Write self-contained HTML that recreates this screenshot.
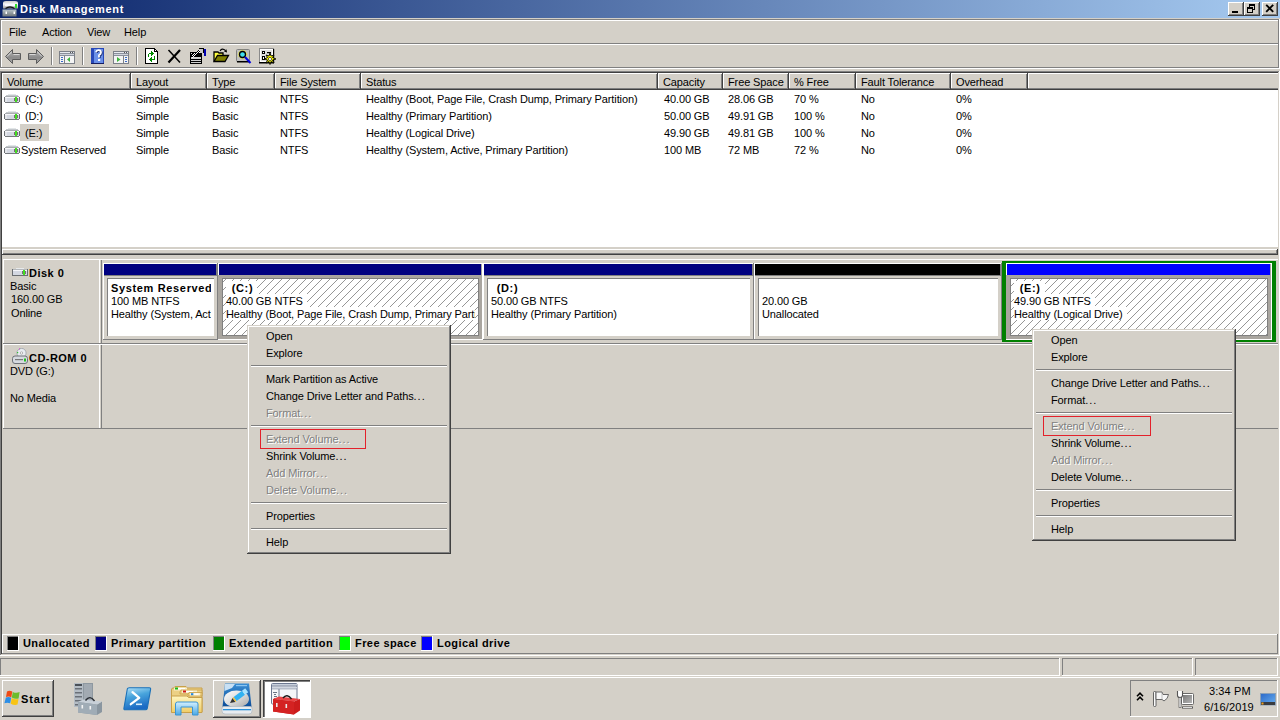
<!DOCTYPE html><html><head><meta charset="utf-8"><title>Disk Management</title><style>html,body{margin:0;padding:0}body{width:1280px;height:720px;overflow:hidden;position:relative;background:#d4d0c8;font-family:"Liberation Sans",sans-serif;font-size:11px;color:#000}body div{position:absolute}.t{white-space:nowrap;line-height:13px;font-size:11px}</style></head><body>
<div style="left:0px;top:0px;width:1280px;height:18px;background:linear-gradient(to right,#0a246a,#a6caf0);"></div>
<svg style="position:absolute;left:2px;top:0px" width="17" height="17" viewBox="0 0 17 17"><defs><linearGradient id="tb" x1="0" y1="0" x2="0" y2="1"><stop offset="0" stop-color="#b8c4c8"/><stop offset="1" stop-color="#6c7478"/></linearGradient><linearGradient id="td" x1="0" y1="0" x2="0" y2="1"><stop offset="0" stop-color="#c8c8c8"/><stop offset="0.4" stop-color="#f4f4f8"/><stop offset="1" stop-color="#a0a0a0"/></linearGradient></defs><rect x="0.5" y="9.5" width="14" height="7" fill="url(#tb)"/><rect x="3.5" y="11.5" width="1.5" height="2.5" fill="#fff"/><rect x="11.5" y="11.5" width="1.5" height="2.5" fill="#fff"/><path d="M1 3 Q1 1 4 1 H13 Q16 1 16 3 V8.5 H1 Z" fill="url(#td)"/><rect x="3" y="4" width="10" height="2" fill="#f8f8ff"/><rect x="13" y="4" width="2" height="4" fill="#30e030"/><path d="M3.5 8.5 Q8 5.5 12.5 8.5" fill="none" stroke="#111" stroke-width="1.4"/></svg>
<div class="t" style="left:20px;top:3px;font-weight:bold;color:#fff;letter-spacing:0.7px;">Disk Management</div>
<div style="left:1228px;top:2px;width:16px;height:14px;background:#d4d0c8;"></div>
<div style="left:1228px;top:2px;width:16px;height:1px;background:#ffffff;"></div>
<div style="left:1228px;top:2px;width:1px;height:14px;background:#ffffff;"></div>
<div style="left:1228px;top:15px;width:16px;height:1px;background:#404040;"></div>
<div style="left:1243px;top:2px;width:1px;height:14px;background:#404040;"></div>
<div style="left:1229px;top:14px;width:14px;height:1px;background:#808080;"></div>
<div style="left:1242px;top:3px;width:1px;height:12px;background:#808080;"></div>
<div style="left:1244px;top:2px;width:16px;height:14px;background:#d4d0c8;"></div>
<div style="left:1244px;top:2px;width:16px;height:1px;background:#ffffff;"></div>
<div style="left:1244px;top:2px;width:1px;height:14px;background:#ffffff;"></div>
<div style="left:1244px;top:15px;width:16px;height:1px;background:#404040;"></div>
<div style="left:1259px;top:2px;width:1px;height:14px;background:#404040;"></div>
<div style="left:1245px;top:14px;width:14px;height:1px;background:#808080;"></div>
<div style="left:1258px;top:3px;width:1px;height:12px;background:#808080;"></div>
<div style="left:1262px;top:2px;width:16px;height:14px;background:#d4d0c8;"></div>
<div style="left:1262px;top:2px;width:16px;height:1px;background:#ffffff;"></div>
<div style="left:1262px;top:2px;width:1px;height:14px;background:#ffffff;"></div>
<div style="left:1262px;top:15px;width:16px;height:1px;background:#404040;"></div>
<div style="left:1277px;top:2px;width:1px;height:14px;background:#404040;"></div>
<div style="left:1263px;top:14px;width:14px;height:1px;background:#808080;"></div>
<div style="left:1276px;top:3px;width:1px;height:12px;background:#808080;"></div>
<div style="left:1232px;top:11px;width:6px;height:2px;background:#000;"></div>
<svg style="position:absolute;left:1247px;top:4px" width="10" height="10" viewBox="0 0 10 10" shape-rendering="crispEdges"><path d="M2 0h6v2h-6z M7 2h1v4h-1z M2 2h1v1h-1z M6 5h1v1h-1z" fill="#000"/><path d="M0 3h6v2h-6z M0 5h1v4h-1z M5 5h1v4h-1z M0 8h6v1h-6z" fill="#000"/></svg>
<svg style="position:absolute;left:1265px;top:4px" width="10" height="9" viewBox="0 0 10 9"><path d="M1.2 0.8 L8.2 7.8 M8.2 0.8 L1.2 7.8" stroke="#000" stroke-width="1.9"/></svg>
<div style="left:0px;top:19px;width:1279px;height:1px;background:#808080;"></div>
<div style="left:0px;top:19px;width:1px;height:49px;background:#808080;"></div>
<div style="left:1px;top:20px;width:1277px;height:1px;background:#ffffff;"></div>
<div style="left:1px;top:20px;width:1px;height:47px;background:#ffffff;"></div>
<div style="left:1278px;top:19px;width:1px;height:49px;background:#808080;"></div>
<div style="left:1279px;top:19px;width:1px;height:50px;background:#ffffff;"></div>
<div style="left:0px;top:67px;width:1279px;height:1px;background:#808080;"></div>
<div style="left:0px;top:68px;width:1280px;height:1px;background:#ffffff;"></div>
<div style="left:2px;top:43px;width:1276px;height:1px;background:#808080;"></div>
<div style="left:1px;top:44px;width:1277px;height:1px;background:#ffffff;"></div>
<div class="t" style="left:9px;top:26px;color:#000;letter-spacing:-0.12px;">File</div>
<div class="t" style="left:42px;top:26px;color:#000;letter-spacing:-0.12px;">Action</div>
<div class="t" style="left:87px;top:26px;color:#000;letter-spacing:-0.12px;">View</div>
<div class="t" style="left:124px;top:26px;color:#000;letter-spacing:-0.12px;">Help</div>
<svg style="position:absolute;left:4px;top:48px" width="18" height="17" viewBox="0 0 18 17"><defs><linearGradient id="ga" x1="0" y1="0" x2="0" y2="1"><stop offset="0" stop-color="#b8b8b8"/><stop offset="0.6" stop-color="#8a8a8a"/><stop offset="1" stop-color="#b0b0b0"/></linearGradient></defs><path d="M1.5 8.5 L8.5 1.5 V5.5 H16.5 V11.5 H8.5 V15.5 Z" fill="url(#ga)" stroke="#5c5c5c" stroke-linejoin="round"/><path d="M3 8.5 L7.5 4 M9.5 6.5 H15.5" stroke="#e8e8e8" stroke-width="0.8" fill="none"/></svg>
<svg style="position:absolute;left:27px;top:48px" width="18" height="17" viewBox="0 0 18 17"><path d="M16.5 8.5 L9.5 1.5 V5.5 H1.5 V11.5 H9.5 V15.5 Z" fill="url(#ga)" stroke="#5c5c5c" stroke-linejoin="round"/><path d="M15 8.5 L10.5 4 M2.5 6.5 H8.5" stroke="#e8e8e8" stroke-width="0.8" fill="none"/></svg>
<div style="left:51px;top:47px;width:1px;height:18px;background:#808080;"></div>
<div style="left:52px;top:47px;width:1px;height:18px;background:#ffffff;"></div>
<svg style="position:absolute;left:59px;top:51px" width="16" height="13" viewBox="0 0 16 13"><rect x="0.5" y="0.5" width="15" height="12" fill="#f4f4f4" stroke="#7c8088"/><rect x="1" y="1" width="14" height="1" fill="#e8eaf0"/><rect x="1" y="2" width="14" height="1" fill="#8a909c"/><rect x="11" y="1" width="1" height="1" fill="#555"/><rect x="13" y="1" width="1" height="1" fill="#555"/><rect x="1" y="3" width="14" height="1" fill="#d0d4dc"/><rect x="1" y="4" width="14" height="1" fill="#8a909c"/><rect x="5" y="5" width="1" height="7" fill="#7c8088"/><rect x="2" y="6" width="2" height="1" fill="#3a6cc8"/><rect x="2" y="8" width="2" height="1" fill="#3a6cc8"/><rect x="2" y="10" width="2" height="1" fill="#3a6cc8"/><path d="M8 8.5 L11 6 V11 Z" fill="#3cb53c"/></svg>
<div style="left:82px;top:47px;width:1px;height:18px;background:#808080;"></div>
<div style="left:83px;top:47px;width:1px;height:18px;background:#ffffff;"></div>
<svg style="position:absolute;left:91px;top:48px" width="13" height="16" viewBox="0 0 13 16"><rect x="0" y="0" width="13" height="16" fill="#2848b8"/><rect x="3" y="1" width="9" height="14" fill="#6a90e8"/><rect x="0" y="15" width="13" height="1" fill="#141c60"/><path d="M5 4.2 Q5.5 2.2 7.5 2.2 Q10 2.2 10 4.6 Q10 6.2 8 7.2 L8 9.5" fill="none" stroke="#1c2c70" stroke-width="1.8" transform="translate(0.8,0.6)"/><path d="M5 4.2 Q5.5 2.2 7.5 2.2 Q10 2.2 10 4.6 Q10 6.2 8 7.2 L8 9.5" fill="none" stroke="#fff" stroke-width="1.8"/><rect x="7" y="11" width="2.2" height="2" fill="#fff"/></svg>
<svg style="position:absolute;left:113px;top:51px" width="16" height="13" viewBox="0 0 16 13"><rect x="0.5" y="0.5" width="15" height="12" fill="#f4f4f4" stroke="#7c8088"/><rect x="1" y="1" width="14" height="1" fill="#e8eaf0"/><rect x="1" y="2" width="14" height="1" fill="#8a909c"/><rect x="11" y="1" width="1" height="1" fill="#555"/><rect x="13" y="1" width="1" height="1" fill="#555"/><rect x="1" y="3" width="14" height="1" fill="#d0d4dc"/><rect x="1" y="4" width="14" height="1" fill="#8a909c"/><rect x="10" y="5" width="1" height="7" fill="#7c8088"/><rect x="12" y="6" width="2" height="1" fill="#3a6cc8"/><rect x="12" y="8" width="2" height="1" fill="#3a6cc8"/><rect x="12" y="10" width="2" height="1" fill="#3a6cc8"/><path d="M7.5 8.5 L4 6 V11 Z" fill="#3cb53c"/></svg>
<div style="left:136px;top:47px;width:1px;height:18px;background:#808080;"></div>
<div style="left:137px;top:47px;width:1px;height:18px;background:#ffffff;"></div>
<svg style="position:absolute;left:145px;top:48px" width="13" height="16" viewBox="0 0 13 16" shape-rendering="crispEdges"><path d="M0 0h10v1h-10z M0 1h1v14h-1z M0 15h13v1h-13z M12 3h1v12h-1z M10 1h1v1h-1z M11 2h1v1h-1z M9 1h1v3h-1z M9 3h3v1h-3z" fill="#000"/><path d="M1 1h8v3h3v11h-11z" fill="#fff"/><path d="M10 2h1v1h-1z" fill="#fff"/><path d="M4 5h5v1h-5z M6 3h1v5h-1z M7 4h1v3h-1z M8 5h1v1h-1z M3 6h1v3h-1z" fill="#008c00"/><path d="M5 11h5v1h-5z M6 9h1v5h-1z M5 10h1v3h-1z M4 11h1v1h-1z M9 8h1v3h-1z" fill="#008c00"/></svg>
<svg style="position:absolute;left:167px;top:49px" width="15" height="15" viewBox="0 0 15 15"><path d="M1.5 13.5 L13 1" stroke="#000" stroke-width="2.2"/><path d="M1.5 1 L13 13.5" stroke="#000" stroke-width="1.5"/></svg>
<svg style="position:absolute;left:190px;top:48px" width="16" height="16" viewBox="0 0 16 16" shape-rendering="crispEdges"><rect x="0" y="4" width="12" height="12" fill="#000"/><rect x="1" y="9" width="10" height="2" fill="#d0d0d0"/><rect x="1" y="12" width="10" height="1" fill="#d0d0d0"/><rect x="1" y="14" width="10" height="1" fill="#d0d0d0"/><rect x="1" y="5" width="1" height="1" fill="#ddd"/><rect x="2" y="7" width="1" height="1" fill="#fff"/><rect x="2" y="8" width="1" height="1" fill="#000"/><rect x="2" y="9" width="1" height="1" fill="#fff"/><rect x="3" y="6" width="1" height="1" fill="#fff"/><rect x="3" y="7" width="1" height="1" fill="#000"/><rect x="3" y="8" width="1" height="1" fill="#fff"/><rect x="4" y="5" width="1" height="1" fill="#fff"/><rect x="4" y="6" width="1" height="1" fill="#000"/><rect x="4" y="7" width="1" height="1" fill="#fff"/><rect x="5" y="5" width="1" height="1" fill="#000"/><rect x="5" y="6" width="1" height="1" fill="#fff"/><rect x="5" y="7" width="1" height="1" fill="#000"/><rect x="6" y="4" width="1" height="1" fill="#000"/><rect x="6" y="5" width="1" height="1" fill="#fff"/><rect x="6" y="6" width="1" height="1" fill="#000"/><rect x="7" y="3" width="1" height="1" fill="#000"/><rect x="7" y="4" width="1" height="1" fill="#fff"/><rect x="7" y="5" width="1" height="1" fill="#000"/><rect x="8" y="2" width="1" height="1" fill="#000"/><rect x="8" y="3" width="1" height="1" fill="#fff"/><rect x="8" y="4" width="1" height="1" fill="#000"/><rect x="9" y="2" width="1" height="1" fill="#fff"/><rect x="9" y="3" width="1" height="1" fill="#000"/><rect x="9" y="4" width="1" height="1" fill="#fff"/><rect x="10" y="1" width="1" height="1" fill="#fff"/><rect x="10" y="2" width="1" height="1" fill="#000"/><rect x="10" y="3" width="1" height="1" fill="#fff"/><rect x="11" y="0" width="1" height="1" fill="#fff"/><rect x="11" y="1" width="1" height="1" fill="#000"/><rect x="11" y="2" width="1" height="1" fill="#fff"/><rect x="9" y="0" width="5" height="1" fill="#000"/><rect x="10" y="1" width="3" height="4" fill="#c8c8c8"/><rect x="13" y="1" width="1" height="4" fill="#000"/><rect x="14" y="1" width="1.5" height="7" fill="#0000b0"/></svg>
<svg style="position:absolute;left:213px;top:48px" width="17" height="15" viewBox="0 0 17 15"><path d="M1 13.5 V4 H5 L6 5 H10 V8" fill="#ffff40" stroke="#000" stroke-width="1.3"/><path d="M1 13.5 L4.5 7.5 H15.5 L12 13.5 Z" fill="#808000" stroke="#000" stroke-width="1.3"/><path d="M7 3 Q9 -0.5 12.5 2.5" fill="none" stroke="#000" stroke-width="1.1"/><path d="M11 3.5 L14 4.5 L13.5 1.2 Z" fill="#000"/></svg>
<svg style="position:absolute;left:236px;top:48px" width="16" height="17" viewBox="0 0 16 17"><rect x="0.5" y="1.5" width="13" height="12" rx="1" fill="#c0c0c0" stroke="#808080"/><rect x="1" y="13" width="13" height="1.5" fill="#000"/><circle cx="6.5" cy="6.5" r="4.2" fill="none" stroke="#ffff00" stroke-width="1" stroke-dasharray="1 1"/><circle cx="6.5" cy="6.5" r="3" fill="#40e0f0" stroke="#000" stroke-width="1.3"/><path d="M9 9 L14.5 15" stroke="#0000e0" stroke-width="2"/></svg>
<svg style="position:absolute;left:259px;top:48px" width="18" height="17" viewBox="0 0 18 17"><rect x="0.5" y="0.5" width="14" height="14" fill="#fff" stroke="#8a8a8a"/><rect x="2" y="2" width="11" height="11" fill="#e0e0e0"/><rect x="0" y="14" width="15" height="1.5" fill="#000"/><rect x="14" y="1" width="1.2" height="14" fill="#000"/><rect x="3" y="3" width="3" height="3" fill="#000"/><rect x="4" y="4" width="1" height="1" fill="#fff"/><rect x="8" y="4" width="4" height="1.2" fill="#000"/><rect x="3" y="8" width="3" height="4" fill="#000"/><rect x="4" y="9" width="1" height="2" fill="#fff"/><path d="M11 5 L12 8 L15 7 L13.5 9.5 L17 11 L13.5 12 L15 15 L12 13.5 L11 16.5 L10 13.5 L7 15 L8.5 12 L5.5 11 L8.5 9.5 L7 7 L10 8 Z" fill="#ffff00" stroke="#000" stroke-width="0.9"/><circle cx="11" cy="11" r="1.6" fill="#fff" stroke="#000" stroke-width="0.6"/></svg>
<div style="left:0px;top:71px;width:1279px;height:1px;background:#808080;"></div>
<div style="left:0px;top:71px;width:1px;height:584px;background:#808080;"></div>
<div style="left:1px;top:72px;width:1277px;height:1px;background:#404040;"></div>
<div style="left:1px;top:72px;width:1px;height:582px;background:#404040;"></div>
<div style="left:1279px;top:71px;width:1px;height:585px;background:#ffffff;"></div>
<div style="left:0px;top:655px;width:1280px;height:1px;background:#ffffff;"></div>
<div style="left:2px;top:73px;width:1276px;height:174px;background:#ffffff;"></div>
<div style="left:2px;top:73px;width:1276px;height:17px;background:#d4d0c8;"></div>
<div style="left:2px;top:73px;width:129px;height:1px;background:#ffffff;"></div>
<div style="left:2px;top:73px;width:1px;height:16px;background:#ffffff;"></div>
<div style="left:129px;top:74px;width:1px;height:15px;background:#808080;"></div>
<div style="left:130px;top:73px;width:1px;height:17px;background:#404040;"></div>
<div class="t" style="left:7px;top:76px;color:#000;letter-spacing:-0.12px;">Volume</div>
<div style="left:131px;top:73px;width:76px;height:1px;background:#ffffff;"></div>
<div style="left:131px;top:73px;width:1px;height:16px;background:#ffffff;"></div>
<div style="left:205px;top:74px;width:1px;height:15px;background:#808080;"></div>
<div style="left:206px;top:73px;width:1px;height:17px;background:#404040;"></div>
<div class="t" style="left:136px;top:76px;color:#000;letter-spacing:-0.12px;">Layout</div>
<div style="left:207px;top:73px;width:68px;height:1px;background:#ffffff;"></div>
<div style="left:207px;top:73px;width:1px;height:16px;background:#ffffff;"></div>
<div style="left:273px;top:74px;width:1px;height:15px;background:#808080;"></div>
<div style="left:274px;top:73px;width:1px;height:17px;background:#404040;"></div>
<div class="t" style="left:212px;top:76px;color:#000;letter-spacing:-0.12px;">Type</div>
<div style="left:275px;top:73px;width:86px;height:1px;background:#ffffff;"></div>
<div style="left:275px;top:73px;width:1px;height:16px;background:#ffffff;"></div>
<div style="left:359px;top:74px;width:1px;height:15px;background:#808080;"></div>
<div style="left:360px;top:73px;width:1px;height:17px;background:#404040;"></div>
<div class="t" style="left:280px;top:76px;color:#000;letter-spacing:-0.12px;">File System</div>
<div style="left:361px;top:73px;width:297px;height:1px;background:#ffffff;"></div>
<div style="left:361px;top:73px;width:1px;height:16px;background:#ffffff;"></div>
<div style="left:656px;top:74px;width:1px;height:15px;background:#808080;"></div>
<div style="left:657px;top:73px;width:1px;height:17px;background:#404040;"></div>
<div class="t" style="left:366px;top:76px;color:#000;letter-spacing:-0.12px;">Status</div>
<div style="left:658px;top:73px;width:65px;height:1px;background:#ffffff;"></div>
<div style="left:658px;top:73px;width:1px;height:16px;background:#ffffff;"></div>
<div style="left:721px;top:74px;width:1px;height:15px;background:#808080;"></div>
<div style="left:722px;top:73px;width:1px;height:17px;background:#404040;"></div>
<div class="t" style="left:663px;top:76px;color:#000;letter-spacing:-0.12px;">Capacity</div>
<div style="left:723px;top:73px;width:66px;height:1px;background:#ffffff;"></div>
<div style="left:723px;top:73px;width:1px;height:16px;background:#ffffff;"></div>
<div style="left:787px;top:74px;width:1px;height:15px;background:#808080;"></div>
<div style="left:788px;top:73px;width:1px;height:17px;background:#404040;"></div>
<div class="t" style="left:728px;top:76px;color:#000;letter-spacing:-0.12px;">Free Space</div>
<div style="left:789px;top:73px;width:67px;height:1px;background:#ffffff;"></div>
<div style="left:789px;top:73px;width:1px;height:16px;background:#ffffff;"></div>
<div style="left:854px;top:74px;width:1px;height:15px;background:#808080;"></div>
<div style="left:855px;top:73px;width:1px;height:17px;background:#404040;"></div>
<div class="t" style="left:794px;top:76px;color:#000;letter-spacing:-0.12px;">% Free</div>
<div style="left:856px;top:73px;width:95px;height:1px;background:#ffffff;"></div>
<div style="left:856px;top:73px;width:1px;height:16px;background:#ffffff;"></div>
<div style="left:949px;top:74px;width:1px;height:15px;background:#808080;"></div>
<div style="left:950px;top:73px;width:1px;height:17px;background:#404040;"></div>
<div class="t" style="left:861px;top:76px;color:#000;letter-spacing:-0.12px;">Fault Tolerance</div>
<div style="left:951px;top:73px;width:77px;height:1px;background:#ffffff;"></div>
<div style="left:951px;top:73px;width:1px;height:16px;background:#ffffff;"></div>
<div style="left:1026px;top:74px;width:1px;height:15px;background:#808080;"></div>
<div style="left:1027px;top:73px;width:1px;height:17px;background:#404040;"></div>
<div class="t" style="left:956px;top:76px;color:#000;letter-spacing:-0.12px;">Overhead</div>
<div style="left:1028px;top:73px;width:250px;height:1px;background:#ffffff;"></div>
<div style="left:1028px;top:73px;width:1px;height:16px;background:#ffffff;"></div>
<div style="left:2px;top:88px;width:1276px;height:1px;background:#808080;"></div>
<div style="left:2px;top:89px;width:1276px;height:1px;background:#404040;"></div>
<div style="left:130px;top:73px;width:1px;height:17px;background:#404040;"></div>
<div style="left:206px;top:73px;width:1px;height:17px;background:#404040;"></div>
<div style="left:274px;top:73px;width:1px;height:17px;background:#404040;"></div>
<div style="left:360px;top:73px;width:1px;height:17px;background:#404040;"></div>
<div style="left:657px;top:73px;width:1px;height:17px;background:#404040;"></div>
<div style="left:722px;top:73px;width:1px;height:17px;background:#404040;"></div>
<div style="left:788px;top:73px;width:1px;height:17px;background:#404040;"></div>
<div style="left:855px;top:73px;width:1px;height:17px;background:#404040;"></div>
<div style="left:950px;top:73px;width:1px;height:17px;background:#404040;"></div>
<div style="left:1027px;top:73px;width:1px;height:17px;background:#404040;"></div>
<div style="left:20px;top:124px;width:29px;height:17px;background:#d4d0c8;"></div>
<svg style="position:absolute;left:4px;top:94px" width="16" height="9" viewBox="0 0 16 9" shape-rendering="crispEdges"><rect x="4" y="0" width="8" height="1" fill="#e2e6e8"/><rect x="2" y="1" width="12" height="1" fill="#c4c8cc"/><rect x="1" y="2" width="14" height="1" fill="#a8acb0"/><rect x="0" y="3" width="1" height="5" fill="#6a6e72"/><rect x="15" y="3" width="1" height="5" fill="#6a6e72"/><rect x="1" y="3" width="14" height="1" fill="#f6f6fa"/><rect x="1" y="4" width="14" height="4" fill="#d4d8e2"/><rect x="1" y="4" width="2" height="4" fill="#e4e6ea"/><rect x="10" y="4" width="1" height="3" fill="#7a6a7a"/><rect x="13" y="4" width="1" height="3" fill="#7a6a7a"/><rect x="11" y="3" width="2" height="5" fill="#44dd22"/><rect x="1" y="8" width="14" height="1" fill="#74787c"/></svg>
<div class="t" style="left:25px;top:93px;color:#000;letter-spacing:-0.12px;">(C:)</div>
<div class="t" style="left:136px;top:93px;color:#000;letter-spacing:-0.12px;">Simple</div>
<div class="t" style="left:212px;top:93px;color:#000;letter-spacing:-0.12px;">Basic</div>
<div class="t" style="left:280px;top:93px;color:#000;letter-spacing:-0.12px;">NTFS</div>
<div class="t" style="left:366px;top:93px;color:#000;letter-spacing:-0.12px;">Healthy (Boot, Page File, Crash Dump, Primary Partition)</div>
<div class="t" style="left:664px;top:93px;color:#000;letter-spacing:-0.12px;">40.00 GB</div>
<div class="t" style="left:728px;top:93px;color:#000;letter-spacing:-0.12px;">28.06 GB</div>
<div class="t" style="left:794px;top:93px;color:#000;letter-spacing:-0.12px;">70 %</div>
<div class="t" style="left:861px;top:93px;color:#000;letter-spacing:-0.12px;">No</div>
<div class="t" style="left:956px;top:93px;color:#000;letter-spacing:-0.12px;">0%</div>
<svg style="position:absolute;left:4px;top:111px" width="16" height="9" viewBox="0 0 16 9" shape-rendering="crispEdges"><rect x="4" y="0" width="8" height="1" fill="#e2e6e8"/><rect x="2" y="1" width="12" height="1" fill="#c4c8cc"/><rect x="1" y="2" width="14" height="1" fill="#a8acb0"/><rect x="0" y="3" width="1" height="5" fill="#6a6e72"/><rect x="15" y="3" width="1" height="5" fill="#6a6e72"/><rect x="1" y="3" width="14" height="1" fill="#f6f6fa"/><rect x="1" y="4" width="14" height="4" fill="#d4d8e2"/><rect x="1" y="4" width="2" height="4" fill="#e4e6ea"/><rect x="10" y="4" width="1" height="3" fill="#7a6a7a"/><rect x="13" y="4" width="1" height="3" fill="#7a6a7a"/><rect x="11" y="3" width="2" height="5" fill="#44dd22"/><rect x="1" y="8" width="14" height="1" fill="#74787c"/></svg>
<div class="t" style="left:25px;top:110px;color:#000;letter-spacing:-0.12px;">(D:)</div>
<div class="t" style="left:136px;top:110px;color:#000;letter-spacing:-0.12px;">Simple</div>
<div class="t" style="left:212px;top:110px;color:#000;letter-spacing:-0.12px;">Basic</div>
<div class="t" style="left:280px;top:110px;color:#000;letter-spacing:-0.12px;">NTFS</div>
<div class="t" style="left:366px;top:110px;color:#000;letter-spacing:-0.12px;">Healthy (Primary Partition)</div>
<div class="t" style="left:664px;top:110px;color:#000;letter-spacing:-0.12px;">50.00 GB</div>
<div class="t" style="left:728px;top:110px;color:#000;letter-spacing:-0.12px;">49.91 GB</div>
<div class="t" style="left:794px;top:110px;color:#000;letter-spacing:-0.12px;">100 %</div>
<div class="t" style="left:861px;top:110px;color:#000;letter-spacing:-0.12px;">No</div>
<div class="t" style="left:956px;top:110px;color:#000;letter-spacing:-0.12px;">0%</div>
<svg style="position:absolute;left:4px;top:128px" width="16" height="9" viewBox="0 0 16 9" shape-rendering="crispEdges"><rect x="4" y="0" width="8" height="1" fill="#e2e6e8"/><rect x="2" y="1" width="12" height="1" fill="#c4c8cc"/><rect x="1" y="2" width="14" height="1" fill="#a8acb0"/><rect x="0" y="3" width="1" height="5" fill="#6a6e72"/><rect x="15" y="3" width="1" height="5" fill="#6a6e72"/><rect x="1" y="3" width="14" height="1" fill="#f6f6fa"/><rect x="1" y="4" width="14" height="4" fill="#d4d8e2"/><rect x="1" y="4" width="2" height="4" fill="#e4e6ea"/><rect x="10" y="4" width="1" height="3" fill="#7a6a7a"/><rect x="13" y="4" width="1" height="3" fill="#7a6a7a"/><rect x="11" y="3" width="2" height="5" fill="#44dd22"/><rect x="1" y="8" width="14" height="1" fill="#74787c"/></svg>
<div class="t" style="left:25px;top:127px;color:#000;letter-spacing:-0.12px;">(E:)</div>
<div class="t" style="left:136px;top:127px;color:#000;letter-spacing:-0.12px;">Simple</div>
<div class="t" style="left:212px;top:127px;color:#000;letter-spacing:-0.12px;">Basic</div>
<div class="t" style="left:280px;top:127px;color:#000;letter-spacing:-0.12px;">NTFS</div>
<div class="t" style="left:366px;top:127px;color:#000;letter-spacing:-0.12px;">Healthy (Logical Drive)</div>
<div class="t" style="left:664px;top:127px;color:#000;letter-spacing:-0.12px;">49.90 GB</div>
<div class="t" style="left:728px;top:127px;color:#000;letter-spacing:-0.12px;">49.81 GB</div>
<div class="t" style="left:794px;top:127px;color:#000;letter-spacing:-0.12px;">100 %</div>
<div class="t" style="left:861px;top:127px;color:#000;letter-spacing:-0.12px;">No</div>
<div class="t" style="left:956px;top:127px;color:#000;letter-spacing:-0.12px;">0%</div>
<svg style="position:absolute;left:4px;top:145px" width="16" height="9" viewBox="0 0 16 9" shape-rendering="crispEdges"><rect x="4" y="0" width="8" height="1" fill="#e2e6e8"/><rect x="2" y="1" width="12" height="1" fill="#c4c8cc"/><rect x="1" y="2" width="14" height="1" fill="#a8acb0"/><rect x="0" y="3" width="1" height="5" fill="#6a6e72"/><rect x="15" y="3" width="1" height="5" fill="#6a6e72"/><rect x="1" y="3" width="14" height="1" fill="#f6f6fa"/><rect x="1" y="4" width="14" height="4" fill="#d4d8e2"/><rect x="1" y="4" width="2" height="4" fill="#e4e6ea"/><rect x="10" y="4" width="1" height="3" fill="#7a6a7a"/><rect x="13" y="4" width="1" height="3" fill="#7a6a7a"/><rect x="11" y="3" width="2" height="5" fill="#44dd22"/><rect x="1" y="8" width="14" height="1" fill="#74787c"/></svg>
<div class="t" style="left:21px;top:144px;color:#000;letter-spacing:-0.12px;">System Reserved</div>
<div class="t" style="left:136px;top:144px;color:#000;letter-spacing:-0.12px;">Simple</div>
<div class="t" style="left:212px;top:144px;color:#000;letter-spacing:-0.12px;">Basic</div>
<div class="t" style="left:280px;top:144px;color:#000;letter-spacing:-0.12px;">NTFS</div>
<div class="t" style="left:366px;top:144px;color:#000;letter-spacing:-0.12px;">Healthy (System, Active, Primary Partition)</div>
<div class="t" style="left:664px;top:144px;color:#000;letter-spacing:-0.12px;">100 MB</div>
<div class="t" style="left:728px;top:144px;color:#000;letter-spacing:-0.12px;">72 MB</div>
<div class="t" style="left:794px;top:144px;color:#000;letter-spacing:-0.12px;">72 %</div>
<div class="t" style="left:861px;top:144px;color:#000;letter-spacing:-0.12px;">No</div>
<div class="t" style="left:956px;top:144px;color:#000;letter-spacing:-0.12px;">0%</div>
<div style="left:2px;top:249px;width:1275px;height:1px;background:#ffffff;"></div>
<div style="left:2px;top:249px;width:1px;height:5px;background:#ffffff;"></div>
<div style="left:1276px;top:250px;width:1px;height:4px;background:#808080;"></div>
<div style="left:1277px;top:249px;width:1px;height:6px;background:#404040;"></div>
<div style="left:3px;top:253px;width:1274px;height:1px;background:#808080;"></div>
<div style="left:1px;top:254px;width:1277px;height:1px;background:#404040;"></div>
<div style="left:3px;top:259px;width:1275px;height:1px;background:#ffffff;"></div>
<div style="left:3px;top:259px;width:1px;height:84px;background:#ffffff;"></div>
<div style="left:3px;top:343px;width:1275px;height:1px;background:#808080;"></div>
<div style="left:3px;top:344px;width:1275px;height:1px;background:#ffffff;"></div>
<div style="left:3px;top:345px;width:1px;height:83px;background:#ffffff;"></div>
<div style="left:3px;top:428px;width:1275px;height:1px;background:#808080;"></div>
<div style="left:99px;top:260px;width:1px;height:83px;background:#ffffff;"></div>
<div style="left:101px;top:260px;width:1px;height:83px;background:#808080;"></div>
<div style="left:99px;top:345px;width:1px;height:83px;background:#ffffff;"></div>
<div style="left:101px;top:345px;width:1px;height:83px;background:#808080;"></div>
<svg style="position:absolute;left:12px;top:268px" width="16" height="8" viewBox="0 0 16 8" shape-rendering="crispEdges"><rect x="4" y="0" width="8" height="1" fill="#e8eaec"/><rect x="1" y="1" width="14" height="1" fill="#b4b8bc"/><rect x="0" y="1" width="1" height="6" fill="#6a6e72"/><rect x="15" y="1" width="1" height="6" fill="#6a6e72"/><rect x="1" y="2" width="14" height="1" fill="#f6f6fa"/><rect x="1" y="3" width="14" height="4" fill="#d4d8e2"/><rect x="10" y="3" width="1" height="3" fill="#7a6a7a"/><rect x="13" y="3" width="1" height="3" fill="#7a6a7a"/><rect x="11" y="2" width="2" height="5" fill="#44dd22"/><rect x="0" y="7" width="16" height="1" fill="#6a6e72"/></svg>
<div class="t" style="left:29px;top:267px;font-weight:bold;color:#000;letter-spacing:0.5px;">Disk 0</div>
<div class="t" style="left:10px;top:280px;color:#000;letter-spacing:-0.12px;">Basic</div>
<div class="t" style="left:11px;top:293px;color:#000;letter-spacing:-0.12px;">160.00 GB</div>
<div class="t" style="left:11px;top:307px;color:#000;letter-spacing:-0.12px;">Online</div>
<svg style="position:absolute;left:12px;top:348px" width="16" height="16" viewBox="0 0 16 16"><circle cx="9.5" cy="5" r="4.6" fill="#e8ecf0" stroke="#9aa0a8" stroke-width="0.8"/><circle cx="9.5" cy="5" r="1.2" fill="#fff" stroke="#888" stroke-width="0.6"/><rect x="7" y="0.5" width="1" height="1" fill="#d040d0"/><rect x="5" y="4" width="1.2" height="1.2" fill="#30c030"/><rect x="0.5" y="8" width="15" height="7.5" rx="2.5" fill="#d6dae0" stroke="#6e7278"/><rect x="3" y="11" width="8" height="1.2" fill="#777"/><rect x="12" y="10.5" width="2" height="3" fill="#22c022"/></svg>
<div class="t" style="left:29px;top:352px;font-weight:bold;color:#000;letter-spacing:0.45px;">CD-ROM 0</div>
<div class="t" style="left:10px;top:365px;color:#000;letter-spacing:-0.12px;">DVD (G:)</div>
<div class="t" style="left:10px;top:392px;color:#000;letter-spacing:-0.12px;">No Media</div>
<div style="left:103px;top:263px;width:115px;height:1px;background:#ffffff;"></div>
<div style="left:104px;top:264px;width:112px;height:11px;background:#000080;"></div>
<div style="left:103px;top:263px;width:1px;height:77px;background:#ffffff;"></div>
<div style="left:216px;top:264px;width:1px;height:11px;background:#808080;"></div>
<div style="left:217px;top:263px;width:1px;height:77px;background:#808080;"></div>
<div style="left:104px;top:275px;width:113px;height:1px;background:#808080;"></div>
<div style="left:103px;top:339px;width:115px;height:1px;background:#808080;"></div>
<div style="left:107px;top:278px;width:107px;height:1px;background:#808080;"></div>
<div style="left:107px;top:278px;width:1px;height:58px;background:#808080;"></div>
<div style="left:108px;top:279px;width:106px;height:57px;background:#ffffff;"></div>
<div style="left:108px;top:279px;width:103px;height:56px;overflow:hidden"><div class="t" style="left:3px;top:2px;padding-top:1px;padding-left:0px;padding-right:4px;height:12px;font-weight:bold;letter-spacing:0.65px;background:#fff">System Reserved</div><div class="t" style="left:3px;top:15px;padding-top:1px;padding-left:0px;padding-right:4px;height:12px;letter-spacing:-0.12px;background:#fff">100 MB NTFS</div><div class="t" style="left:3px;top:28px;padding-top:1px;padding-left:0px;padding-right:4px;height:12px;letter-spacing:-0.12px;background:#fff">Healthy (System, Active, Primary Partition)</div></div>
<div style="left:218px;top:263px;width:265px;height:1px;background:#ffffff;"></div>
<div style="left:219px;top:264px;width:262px;height:11px;background:#000080;"></div>
<div style="left:218px;top:263px;width:1px;height:12px;background:#ffffff;"></div>
<div style="left:218px;top:275px;width:264px;height:64px;background:#a9a59f;"></div>
<div style="left:481px;top:264px;width:1px;height:11px;background:#a9a59f;"></div>
<div style="left:482px;top:263px;width:1px;height:77px;background:#ffffff;"></div>
<div style="left:218px;top:339px;width:265px;height:1px;background:#ffffff;"></div>
<div style="left:222px;top:278px;width:257px;height:58px;background:#808080;"></div>
<svg style="position:absolute;left:223px;top:279px" width="255" height="56" shape-rendering="crispEdges"><defs><pattern id="hp1" x="1" y="1" width="8" height="8" patternUnits="userSpaceOnUse"><g fill="#969696"><rect x="0" y="0" width="1" height="1"/><rect x="1" y="7" width="1" height="1"/><rect x="2" y="6" width="1" height="1"/><rect x="3" y="5" width="1" height="1"/><rect x="4" y="4" width="1" height="1"/><rect x="5" y="3" width="1" height="1"/><rect x="6" y="2" width="1" height="1"/><rect x="7" y="1" width="1" height="1"/></g></pattern></defs><rect width="255" height="56" fill="#fff"/><rect width="255" height="56" fill="url(#hp1)"/></svg>
<div style="left:223px;top:279px;width:252px;height:56px;overflow:hidden"><div class="t" style="left:3px;top:2px;padding-top:1px;padding-left:2px;padding-right:4px;height:12px;font-weight:bold;letter-spacing:0.65px;background:#fff">&nbsp;(C:)</div><div class="t" style="left:3px;top:15px;padding-top:1px;padding-left:0px;padding-right:4px;height:12px;letter-spacing:-0.12px;background:#fff">40.00 GB NTFS</div><div class="t" style="left:3px;top:28px;padding-top:1px;padding-left:0px;padding-right:4px;height:12px;letter-spacing:-0.12px;background:#fff">Healthy (Boot, Page File, Crash Dump, Primary Partition)</div></div>
<div style="left:483px;top:263px;width:271px;height:1px;background:#ffffff;"></div>
<div style="left:484px;top:264px;width:268px;height:11px;background:#000080;"></div>
<div style="left:483px;top:263px;width:1px;height:77px;background:#ffffff;"></div>
<div style="left:752px;top:264px;width:1px;height:11px;background:#808080;"></div>
<div style="left:753px;top:263px;width:1px;height:77px;background:#808080;"></div>
<div style="left:484px;top:275px;width:269px;height:1px;background:#808080;"></div>
<div style="left:483px;top:339px;width:271px;height:1px;background:#808080;"></div>
<div style="left:487px;top:278px;width:263px;height:1px;background:#808080;"></div>
<div style="left:487px;top:278px;width:1px;height:58px;background:#808080;"></div>
<div style="left:488px;top:279px;width:262px;height:57px;background:#ffffff;"></div>
<div style="left:488px;top:279px;width:259px;height:56px;overflow:hidden"><div class="t" style="left:3px;top:2px;padding-top:1px;padding-left:2px;padding-right:4px;height:12px;font-weight:bold;letter-spacing:0.65px;background:#fff">&nbsp;(D:)</div><div class="t" style="left:3px;top:15px;padding-top:1px;padding-left:0px;padding-right:4px;height:12px;letter-spacing:-0.12px;background:#fff">50.00 GB NTFS</div><div class="t" style="left:3px;top:28px;padding-top:1px;padding-left:0px;padding-right:4px;height:12px;letter-spacing:-0.12px;background:#fff">Healthy (Primary Partition)</div></div>
<div style="left:754px;top:263px;width:248px;height:1px;background:#ffffff;"></div>
<div style="left:755px;top:264px;width:245px;height:11px;background:#000000;"></div>
<div style="left:754px;top:263px;width:1px;height:77px;background:#ffffff;"></div>
<div style="left:1000px;top:264px;width:1px;height:11px;background:#808080;"></div>
<div style="left:1001px;top:263px;width:1px;height:77px;background:#808080;"></div>
<div style="left:755px;top:275px;width:246px;height:1px;background:#808080;"></div>
<div style="left:754px;top:339px;width:248px;height:1px;background:#808080;"></div>
<div style="left:758px;top:278px;width:240px;height:1px;background:#808080;"></div>
<div style="left:758px;top:278px;width:1px;height:58px;background:#808080;"></div>
<div style="left:759px;top:279px;width:239px;height:57px;background:#ffffff;"></div>
<div style="left:759px;top:279px;width:236px;height:56px;overflow:hidden"><div class="t" style="left:3px;top:15px;padding-top:1px;padding-left:0px;padding-right:4px;height:12px;letter-spacing:-0.12px;background:#fff">20.00 GB</div><div class="t" style="left:3px;top:28px;padding-top:1px;padding-left:0px;padding-right:4px;height:12px;letter-spacing:-0.12px;background:#fff">Unallocated</div></div>
<div style="left:1002px;top:261px;width:274px;height:2px;background:#008000;"></div>
<div style="left:1002px;top:340px;width:274px;height:2px;background:#008000;"></div>
<div style="left:1002px;top:261px;width:4px;height:81px;background:#008000;"></div>
<div style="left:1272px;top:261px;width:4px;height:81px;background:#008000;"></div>
<div style="left:1006px;top:263px;width:266px;height:1px;background:#ffffff;"></div>
<div style="left:1007px;top:264px;width:263px;height:11px;background:#0000ff;"></div>
<div style="left:1006px;top:263px;width:1px;height:12px;background:#ffffff;"></div>
<div style="left:1006px;top:275px;width:265px;height:64px;background:#a9a59f;"></div>
<div style="left:1270px;top:264px;width:1px;height:11px;background:#a9a59f;"></div>
<div style="left:1271px;top:263px;width:1px;height:77px;background:#ffffff;"></div>
<div style="left:1006px;top:339px;width:266px;height:1px;background:#ffffff;"></div>
<div style="left:1010px;top:278px;width:258px;height:58px;background:#808080;"></div>
<svg style="position:absolute;left:1011px;top:279px" width="256" height="56" shape-rendering="crispEdges"><defs><pattern id="hp2" x="5" y="1" width="8" height="8" patternUnits="userSpaceOnUse"><g fill="#969696"><rect x="0" y="0" width="1" height="1"/><rect x="1" y="7" width="1" height="1"/><rect x="2" y="6" width="1" height="1"/><rect x="3" y="5" width="1" height="1"/><rect x="4" y="4" width="1" height="1"/><rect x="5" y="3" width="1" height="1"/><rect x="6" y="2" width="1" height="1"/><rect x="7" y="1" width="1" height="1"/></g></pattern></defs><rect width="256" height="56" fill="#fff"/><rect width="256" height="56" fill="url(#hp2)"/></svg>
<div style="left:1011px;top:279px;width:253px;height:56px;overflow:hidden"><div class="t" style="left:3px;top:2px;padding-top:1px;padding-left:2px;padding-right:4px;height:12px;font-weight:bold;letter-spacing:0.65px;background:#fff">&nbsp;(E:)</div><div class="t" style="left:3px;top:15px;padding-top:1px;padding-left:0px;padding-right:4px;height:12px;letter-spacing:-0.12px;background:#fff">49.90 GB NTFS</div><div class="t" style="left:3px;top:28px;padding-top:1px;padding-left:0px;padding-right:4px;height:12px;letter-spacing:-0.12px;background:#fff">Healthy (Logical Drive)</div></div>
<div style="left:2px;top:634px;width:1276px;height:1px;background:#ffffff;"></div>
<div style="left:2px;top:634px;width:1px;height:20px;background:#ffffff;"></div>
<div style="left:2px;top:653px;width:1276px;height:1px;background:#808080;"></div>
<div style="left:1277px;top:634px;width:1px;height:20px;background:#808080;"></div>
<div style="left:7px;top:636px;width:12px;height:1px;background:#808080;"></div>
<div style="left:7px;top:636px;width:1px;height:15px;background:#808080;"></div>
<div style="left:7px;top:650px;width:12px;height:1px;background:#ffffff;"></div>
<div style="left:18px;top:636px;width:1px;height:15px;background:#ffffff;"></div>
<div style="left:8px;top:637px;width:10px;height:13px;background:#000000;"></div>
<div class="t" style="left:23px;top:637px;font-weight:bold;color:#000;letter-spacing:0.42px;">Unallocated</div>
<div style="left:95px;top:636px;width:12px;height:1px;background:#808080;"></div>
<div style="left:95px;top:636px;width:1px;height:15px;background:#808080;"></div>
<div style="left:95px;top:650px;width:12px;height:1px;background:#ffffff;"></div>
<div style="left:106px;top:636px;width:1px;height:15px;background:#ffffff;"></div>
<div style="left:96px;top:637px;width:10px;height:13px;background:#000080;"></div>
<div class="t" style="left:111px;top:637px;font-weight:bold;color:#000;letter-spacing:0.42px;">Primary partition</div>
<div style="left:213px;top:636px;width:12px;height:1px;background:#808080;"></div>
<div style="left:213px;top:636px;width:1px;height:15px;background:#808080;"></div>
<div style="left:213px;top:650px;width:12px;height:1px;background:#ffffff;"></div>
<div style="left:224px;top:636px;width:1px;height:15px;background:#ffffff;"></div>
<div style="left:214px;top:637px;width:10px;height:13px;background:#008000;"></div>
<div class="t" style="left:229px;top:637px;font-weight:bold;color:#000;letter-spacing:0.42px;">Extended partition</div>
<div style="left:339px;top:636px;width:12px;height:1px;background:#808080;"></div>
<div style="left:339px;top:636px;width:1px;height:15px;background:#808080;"></div>
<div style="left:339px;top:650px;width:12px;height:1px;background:#ffffff;"></div>
<div style="left:350px;top:636px;width:1px;height:15px;background:#ffffff;"></div>
<div style="left:340px;top:637px;width:10px;height:13px;background:#00ff00;"></div>
<div class="t" style="left:355px;top:637px;font-weight:bold;color:#000;letter-spacing:0.42px;">Free space</div>
<div style="left:421px;top:636px;width:12px;height:1px;background:#808080;"></div>
<div style="left:421px;top:636px;width:1px;height:15px;background:#808080;"></div>
<div style="left:421px;top:650px;width:12px;height:1px;background:#ffffff;"></div>
<div style="left:432px;top:636px;width:1px;height:15px;background:#ffffff;"></div>
<div style="left:422px;top:637px;width:10px;height:13px;background:#0000ff;"></div>
<div class="t" style="left:437px;top:637px;font-weight:bold;color:#000;letter-spacing:0.42px;">Logical drive</div>
<div style="left:0px;top:658px;width:1060px;height:1px;background:#808080;"></div>
<div style="left:0px;top:658px;width:1px;height:18px;background:#808080;"></div>
<div style="left:0px;top:675px;width:1060px;height:1px;background:#ffffff;"></div>
<div style="left:1059px;top:658px;width:1px;height:18px;background:#ffffff;"></div>
<div style="left:1062px;top:658px;width:131px;height:1px;background:#808080;"></div>
<div style="left:1062px;top:658px;width:1px;height:18px;background:#808080;"></div>
<div style="left:1062px;top:675px;width:131px;height:1px;background:#ffffff;"></div>
<div style="left:1192px;top:658px;width:1px;height:18px;background:#ffffff;"></div>
<div style="left:1195px;top:658px;width:83px;height:1px;background:#808080;"></div>
<div style="left:1195px;top:658px;width:1px;height:18px;background:#808080;"></div>
<div style="left:1195px;top:675px;width:83px;height:1px;background:#ffffff;"></div>
<div style="left:1277px;top:658px;width:1px;height:18px;background:#ffffff;"></div>
<div style="left:0px;top:677px;width:1280px;height:1px;background:#ffffff;"></div>
<div style="left:247px;top:325px;width:204px;height:229px;background:#d4d0c8;"></div>
<div style="left:247px;top:325px;width:204px;height:1px;background:#d4d0c8;"></div>
<div style="left:247px;top:325px;width:1px;height:229px;background:#d4d0c8;"></div>
<div style="left:248px;top:326px;width:202px;height:1px;background:#ffffff;"></div>
<div style="left:248px;top:326px;width:1px;height:227px;background:#ffffff;"></div>
<div style="left:248px;top:552px;width:202px;height:1px;background:#808080;"></div>
<div style="left:449px;top:326px;width:1px;height:227px;background:#808080;"></div>
<div style="left:247px;top:553px;width:204px;height:1px;background:#404040;"></div>
<div style="left:450px;top:325px;width:1px;height:229px;background:#404040;"></div>
<div class="t" style="left:266px;top:330px;color:#000;letter-spacing:-0.12px;">Open</div>
<div class="t" style="left:266px;top:347px;color:#000;letter-spacing:-0.12px;">Explore</div>
<div style="left:251px;top:365px;width:196px;height:1px;background:#808080;"></div>
<div style="left:251px;top:366px;width:196px;height:1px;background:#ffffff;"></div>
<div class="t" style="left:266px;top:373px;color:#000;letter-spacing:-0.12px;">Mark Partition as Active</div>
<div class="t" style="left:266px;top:390px;color:#000;letter-spacing:-0.12px;">Change Drive Letter and Paths<span style="letter-spacing:1.0px">...</span></div>
<div class="t" style="left:267px;top:408px;color:#fff;letter-spacing:-0.12px;">Format<span style="letter-spacing:1.0px">...</span></div>
<div class="t" style="left:266px;top:407px;color:#808080;letter-spacing:-0.12px;">Format<span style="letter-spacing:1.0px">...</span></div>
<div style="left:251px;top:425px;width:196px;height:1px;background:#808080;"></div>
<div style="left:251px;top:426px;width:196px;height:1px;background:#ffffff;"></div>
<div class="t" style="left:267px;top:434px;color:#fff;letter-spacing:-0.12px;">Extend Volume<span style="letter-spacing:1.0px">...</span></div>
<div class="t" style="left:266px;top:433px;color:#808080;letter-spacing:-0.12px;">Extend Volume<span style="letter-spacing:1.0px">...</span></div>
<div style="left:260px;top:429px;width:106px;height:20px;border:1px solid #e3212b;box-sizing:border-box"></div>
<div class="t" style="left:266px;top:450px;color:#000;letter-spacing:-0.12px;">Shrink Volume<span style="letter-spacing:1.0px">...</span></div>
<div class="t" style="left:267px;top:468px;color:#fff;letter-spacing:-0.12px;">Add Mirror<span style="letter-spacing:1.0px">...</span></div>
<div class="t" style="left:266px;top:467px;color:#808080;letter-spacing:-0.12px;">Add Mirror<span style="letter-spacing:1.0px">...</span></div>
<div class="t" style="left:267px;top:485px;color:#fff;letter-spacing:-0.12px;">Delete Volume<span style="letter-spacing:1.0px">...</span></div>
<div class="t" style="left:266px;top:484px;color:#808080;letter-spacing:-0.12px;">Delete Volume<span style="letter-spacing:1.0px">...</span></div>
<div style="left:251px;top:502px;width:196px;height:1px;background:#808080;"></div>
<div style="left:251px;top:503px;width:196px;height:1px;background:#ffffff;"></div>
<div class="t" style="left:266px;top:510px;color:#000;letter-spacing:-0.12px;">Properties</div>
<div style="left:251px;top:528px;width:196px;height:1px;background:#808080;"></div>
<div style="left:251px;top:529px;width:196px;height:1px;background:#ffffff;"></div>
<div class="t" style="left:266px;top:536px;color:#000;letter-spacing:-0.12px;">Help</div>
<div style="left:1032px;top:329px;width:204px;height:212px;background:#d4d0c8;"></div>
<div style="left:1032px;top:329px;width:204px;height:1px;background:#d4d0c8;"></div>
<div style="left:1032px;top:329px;width:1px;height:212px;background:#d4d0c8;"></div>
<div style="left:1033px;top:330px;width:202px;height:1px;background:#ffffff;"></div>
<div style="left:1033px;top:330px;width:1px;height:210px;background:#ffffff;"></div>
<div style="left:1033px;top:539px;width:202px;height:1px;background:#808080;"></div>
<div style="left:1234px;top:330px;width:1px;height:210px;background:#808080;"></div>
<div style="left:1032px;top:540px;width:204px;height:1px;background:#404040;"></div>
<div style="left:1235px;top:329px;width:1px;height:212px;background:#404040;"></div>
<div class="t" style="left:1051px;top:334px;color:#000;letter-spacing:-0.12px;">Open</div>
<div class="t" style="left:1051px;top:351px;color:#000;letter-spacing:-0.12px;">Explore</div>
<div style="left:1036px;top:369px;width:196px;height:1px;background:#808080;"></div>
<div style="left:1036px;top:370px;width:196px;height:1px;background:#ffffff;"></div>
<div class="t" style="left:1051px;top:377px;color:#000;letter-spacing:-0.12px;">Change Drive Letter and Paths<span style="letter-spacing:1.0px">...</span></div>
<div class="t" style="left:1051px;top:394px;color:#000;letter-spacing:-0.12px;">Format<span style="letter-spacing:1.0px">...</span></div>
<div style="left:1036px;top:412px;width:196px;height:1px;background:#808080;"></div>
<div style="left:1036px;top:413px;width:196px;height:1px;background:#ffffff;"></div>
<div class="t" style="left:1052px;top:421px;color:#fff;letter-spacing:-0.12px;">Extend Volume<span style="letter-spacing:1.0px">...</span></div>
<div class="t" style="left:1051px;top:420px;color:#808080;letter-spacing:-0.12px;">Extend Volume<span style="letter-spacing:1.0px">...</span></div>
<div style="left:1043px;top:416px;width:108px;height:20px;border:1px solid #e3212b;box-sizing:border-box"></div>
<div class="t" style="left:1051px;top:437px;color:#000;letter-spacing:-0.12px;">Shrink Volume<span style="letter-spacing:1.0px">...</span></div>
<div class="t" style="left:1052px;top:455px;color:#fff;letter-spacing:-0.12px;">Add Mirror<span style="letter-spacing:1.0px">...</span></div>
<div class="t" style="left:1051px;top:454px;color:#808080;letter-spacing:-0.12px;">Add Mirror<span style="letter-spacing:1.0px">...</span></div>
<div class="t" style="left:1051px;top:471px;color:#000;letter-spacing:-0.12px;">Delete Volume<span style="letter-spacing:1.0px">...</span></div>
<div style="left:1036px;top:489px;width:196px;height:1px;background:#808080;"></div>
<div style="left:1036px;top:490px;width:196px;height:1px;background:#ffffff;"></div>
<div class="t" style="left:1051px;top:497px;color:#000;letter-spacing:-0.12px;">Properties</div>
<div style="left:1036px;top:515px;width:196px;height:1px;background:#808080;"></div>
<div style="left:1036px;top:516px;width:196px;height:1px;background:#ffffff;"></div>
<div class="t" style="left:1051px;top:523px;color:#000;letter-spacing:-0.12px;">Help</div>
<div style="left:2px;top:680px;width:52px;height:37px;background:#d4d0c8;"></div>
<div style="left:2px;top:680px;width:52px;height:1px;background:#ffffff;"></div>
<div style="left:2px;top:680px;width:1px;height:37px;background:#ffffff;"></div>
<div style="left:2px;top:716px;width:52px;height:1px;background:#404040;"></div>
<div style="left:53px;top:680px;width:1px;height:37px;background:#404040;"></div>
<div style="left:3px;top:715px;width:50px;height:1px;background:#808080;"></div>
<div style="left:52px;top:681px;width:1px;height:35px;background:#808080;"></div>
<svg style="position:absolute;left:4px;top:690px" width="16" height="16" viewBox="0 0 16 16"><path d="M3 1.5 Q5.5 0.2 8.3 1.6 L7.3 7.2 Q4.6 6 2 7.1 Z" fill="#ee4a16"/><path d="M8.8 1.9 Q12 3.6 15.6 2.1 L14.6 8.4 Q11.2 9.6 7.8 7.6 Z" fill="#6cbc2c"/><path d="M1.9 7.6 Q4.6 6.5 7.2 7.7 L6.2 13.3 Q3.3 12 0.4 13.3 Z" fill="#2c8ee6"/><path d="M7.7 8.1 Q11 10.1 14.5 8.9 L13.5 14.6 Q10.2 15.6 6.7 13.7 Z" fill="#f8c414"/></svg>
<div class="t" style="left:21px;top:693px;font-weight:bold;color:#000;letter-spacing:0.9px;">Start</div>
<svg style="position:absolute;left:74px;top:683px" width="29" height="32" viewBox="0 0 29 32"><rect x="0" y="0" width="9" height="24" fill="#b4bcc4"/><rect x="9" y="0" width="10" height="23" fill="#8e98a0"/><rect x="10" y="1" width="8" height="21" fill="#a2aab2"/><rect x="1" y="1" width="7" height="2" fill="#4a5058"/><rect x="1" y="5" width="7" height="1.5" fill="#6a7078"/><rect x="1" y="9" width="7" height="1.5" fill="#6a7078"/><rect x="1" y="13" width="7" height="1.5" fill="#6a7078"/><rect x="1" y="17" width="7" height="1.5" fill="#6a7078"/><rect x="1" y="21" width="7" height="1.5" fill="#6a7078"/><path d="M4 19 L23 21.5 L28 18.5 V29 L23 32 L4 29.5 Z" fill="#8a96a0"/><path d="M4 19 L9 16.5 L28 18.5 L23 21.5 Z" fill="#c8d0d8"/><path d="M4 19 L23 21.5 V32 L4 29.5 Z" fill="#a0acb6"/><path d="M11.5 17.5 Q16 11.5 20.5 18" fill="none" stroke="#2a2e34" stroke-width="1.4"/><rect x="7.5" y="22" width="1.6" height="3.5" fill="#f4f4f4"/><rect x="15.5" y="23" width="1.6" height="3.5" fill="#f4f4f4"/></svg>
<svg style="position:absolute;left:122px;top:687px" width="30" height="24" viewBox="0 0 30 24"><defs><linearGradient id="gp" x1="0" y1="0" x2="0.3" y2="1"><stop offset="0" stop-color="#b8e4f8"/><stop offset="0.45" stop-color="#48a4dc"/><stop offset="1" stop-color="#1a6ac4"/></linearGradient></defs><path d="M5.3 2 Q5.6 0.8 7.2 0.8 H27.3 Q28.9 0.8 28.6 2.3 L25.3 21.3 Q25 22.8 23.4 22.8 H3.2 Q1.6 22.8 1.9 21.3 Z" fill="url(#gp)" stroke="#1a70b8" stroke-width="1.1"/><path d="M10.5 5.2 L17.2 10.8 L8.8 17.2" fill="none" stroke="#fff" stroke-width="2.3" stroke-linecap="round" stroke-linejoin="round"/><rect x="14" y="16.5" width="6" height="1.6" fill="#d8ecf8"/></svg>
<svg style="position:absolute;left:170px;top:685px" width="34" height="31" viewBox="0 0 34 31"><defs><linearGradient id="gf" x1="0" y1="0" x2="0" y2="1"><stop offset="0" stop-color="#fff6c0"/><stop offset="1" stop-color="#f0cc66"/></linearGradient><linearGradient id="gb" x1="0" y1="0" x2="0" y2="1"><stop offset="0" stop-color="#d4f0ff"/><stop offset="1" stop-color="#4aa8e4"/></linearGradient></defs><path d="M1.5 5 Q1.5 3 3 3 H4 L5 1.5 H16 L17 3 H32 V27 H1.5 Z" fill="#ecd084" stroke="#c8a04a"/><rect x="4" y="2.5" width="13" height="3" fill="#f8eecc"/><rect x="5" y="2.5" width="3" height="2" fill="#18b818"/><rect x="8" y="3" width="7" height="1.2" fill="#fff"/><path d="M10 7 L11 5 H32 V9 H10 Z" fill="#ecd084" stroke="#c8a04a" stroke-width="0.8"/><rect x="12" y="5.5" width="15" height="2.5" fill="#f8eecc"/><rect x="13" y="5.5" width="3" height="2" fill="#d01818"/><rect x="16" y="6" width="7" height="1.2" fill="#fff"/><path d="M18 9.5 L19 7.5 H32 V11 H18 Z" fill="#ecd084" stroke="#c8a04a" stroke-width="0.8"/><rect x="20" y="8" width="10" height="2.5" fill="#f8eecc"/><rect x="21" y="8.2" width="2.5" height="2" fill="#2088e0"/><rect x="23.5" y="8.5" width="5" height="1.2" fill="#fff"/><path d="M1.5 11 H17 L18.5 12.5 H32 V27.5 H1.5 Z" fill="url(#gf)" stroke="#c8a04a"/><path d="M5.5 30 V19 Q5.5 17 7.5 17 H26 Q28 17 28 19 V30 H22.5 V22 H11 V30 Z" fill="url(#gb)" stroke="#3a94d4"/></svg>
<div style="left:213px;top:680px;width:48px;height:38px;background:#d4d0c8;"></div>
<div style="left:213px;top:680px;width:48px;height:1px;background:#ffffff;"></div>
<div style="left:213px;top:680px;width:1px;height:38px;background:#ffffff;"></div>
<div style="left:213px;top:717px;width:48px;height:1px;background:#404040;"></div>
<div style="left:260px;top:680px;width:1px;height:38px;background:#404040;"></div>
<div style="left:214px;top:716px;width:46px;height:1px;background:#808080;"></div>
<div style="left:259px;top:681px;width:1px;height:36px;background:#808080;"></div>
<svg style="position:absolute;left:221px;top:683px" width="32" height="32" viewBox="0 0 32 32"><defs><linearGradient id="gd" x1="0" y1="0" x2="0" y2="1"><stop offset="0" stop-color="#3a8ed4"/><stop offset="1" stop-color="#0c4c98"/></linearGradient><linearGradient id="gdisc" x1="0" y1="0" x2="1" y2="1"><stop offset="0" stop-color="#ffffff"/><stop offset="0.5" stop-color="#dcdcdc"/><stop offset="1" stop-color="#a4a4a4"/></linearGradient></defs><path d="M4 0.5 H28 L30.5 24 H1.5 Z" fill="url(#gd)"/><path d="M4 1 H14 L11 5 L3.5 8 Z" fill="#c8e0f4"/><rect x="15" y="2" width="11" height="1.2" fill="#8ac4f0"/><ellipse cx="15.5" cy="16" rx="12.5" ry="8.5" fill="url(#gdisc)"/><path d="M9 20 L11.5 15 L14.5 19 Z" fill="#333"/><path d="M11.5 15 L12.7 14.1 L15.7 18.1 L14.5 19 Z" fill="#f0c040"/><path d="M12.7 14.1 L21 7.7 L24 11.7 L15.7 18.1 Z" fill="#30b2f2"/><path d="M21 7.7 L24.2 5.25 L27.2 9.25 L24 11.7 Z" fill="#a8e4ff"/><path d="M1 25 Q1 23.5 3 23.5 H29 Q31 23.5 31 25 V28 Q31 31 28 31 H4 Q1 31 1 28 Z" fill="#e8ecf0" stroke="#b4bcc4" stroke-width="0.8"/><rect x="2" y="26" width="28" height="1.3" fill="#2a90d8"/></svg>
<div style="left:263px;top:680px;width:48px;height:38px;background:#ffffff;"></div>
<div style="left:263px;top:680px;width:48px;height:1px;background:#404040;"></div>
<div style="left:263px;top:680px;width:1px;height:38px;background:#404040;"></div>
<div style="left:264px;top:681px;width:46px;height:1px;background:#808080;"></div>
<div style="left:264px;top:681px;width:1px;height:36px;background:#808080;"></div>
<div style="left:263px;top:717px;width:48px;height:1px;background:#ffffff;"></div>
<div style="left:310px;top:680px;width:1px;height:38px;background:#ffffff;"></div>
<svg style="position:absolute;left:271px;top:683px" width="32" height="32" viewBox="0 0 32 32"><rect x="0.5" y="0.5" width="25.5" height="20.5" rx="1" fill="#f4f6f8" stroke="#6c7890"/><rect x="1" y="1" width="25" height="1.5" fill="#c8d0dc"/><rect x="1" y="2.5" width="25" height="1" fill="#6c7890"/><rect x="1" y="4" width="25" height="1.5" fill="#d0d6e0"/><rect x="1" y="5.5" width="25" height="0.8" fill="#8a94a8"/><rect x="7.5" y="6" width="1" height="15" fill="#6c7890"/><rect x="2" y="9" width="4" height="1" fill="#6a7484"/><rect x="3" y="11" width="2" height="1" fill="#6a7484"/><rect x="3" y="13" width="3" height="1" fill="#6a7484"/><rect x="3" y="15" width="2" height="1" fill="#6a7484"/><path d="M2 16 L23 18.5 L29 16 V27.5 L23 31.5 L2 28.5 Z" fill="#cc1c1c"/><path d="M2 16 L8 13.5 L29 16 L23 18.5 Z" fill="#e84444"/><path d="M2 16 L23 18.5 V31.5 L2 28.5 Z" fill="#d42222"/><path d="M12 15 Q16 10 20.5 16" fill="none" stroke="#1c1c1c" stroke-width="1.5"/><rect x="5" y="20" width="1.6" height="4" fill="#e8e8e8"/><rect x="14.5" y="21" width="1.6" height="4" fill="#e8e8e8"/></svg>
<div style="left:1130px;top:680px;width:148px;height:1px;background:#808080;"></div>
<div style="left:1130px;top:680px;width:1px;height:37px;background:#808080;"></div>
<div style="left:1130px;top:716px;width:148px;height:1px;background:#ffffff;"></div>
<div style="left:1277px;top:680px;width:1px;height:37px;background:#ffffff;"></div>
<svg style="position:absolute;left:1136px;top:692px" width="8" height="10" viewBox="0 0 8 10"><path d="M1 4.2 L4 1.2 L7 4.2 M1 8.2 L4 5.2 L7 8.2" fill="none" stroke="#000" stroke-width="1.6"/></svg>
<svg style="position:absolute;left:1152px;top:690px" width="18" height="18" viewBox="0 0 18 18"><rect x="1.5" y="1.5" width="2.5" height="15" rx="1" fill="#fafafa" stroke="#555" stroke-width="0.9"/><path d="M4 2 H10 L11 4.5 H16.5 Q16 9 12 11 Q11 10 10 9.5 H4 Z" fill="#f6f6f6" stroke="#5a5a5a" stroke-width="0.9" stroke-linejoin="round"/><path d="M10 2 V9.5" stroke="#9a9a9a" stroke-width="0.6"/></svg>
<svg style="position:absolute;left:1176px;top:690px" width="19" height="19" viewBox="0 0 19 19"><defs><linearGradient id="gm" x1="0" y1="0" x2="1" y2="1"><stop offset="0" stop-color="#7a7a7a"/><stop offset="1" stop-color="#b4b4b4"/></linearGradient></defs><rect x="5.5" y="3.5" width="12" height="11" rx="1" fill="#fff" stroke="#5a5a5a" stroke-width="0.9"/><rect x="7" y="5" width="9" height="8" fill="url(#gm)"/><path d="M6 17.5 H17" stroke="#5a5a5a" stroke-width="2.2"/><path d="M7 17.5 H16" stroke="#fff" stroke-width="0.8"/><path d="M1.5 1 V5.5 Q1.5 7.5 4 7.5 Q6.5 7.5 6.5 5.5 V1" fill="#fff" stroke="#555" stroke-width="1.1"/><rect x="3.3" y="1" width="1.4" height="5" fill="#fff"/><rect x="3" y="7.5" width="2" height="10" fill="#fff" stroke="#555" stroke-width="0.7"/></svg>
<div class="t" style="left:1209px;top:685px;color:#000;letter-spacing:0.1px;">3:34 PM</div>
<div class="t" style="left:1204px;top:701px;color:#000;letter-spacing:0.1px;">6/16/2019</div>
<svg style="position:absolute;left:1260px;top:693px" width="16" height="13" viewBox="0 0 16 13"><defs><linearGradient id="gw" x1="0" y1="0" x2="1" y2="1"><stop offset="0" stop-color="#2a68c8"/><stop offset="1" stop-color="#6ab0f0"/></linearGradient></defs><rect x="0.5" y="0.5" width="15" height="11.5" fill="url(#gw)" stroke="#8aa0b8"/><rect x="1" y="9" width="14" height="3" fill="#3a3c40"/><rect x="1.5" y="9.5" width="2" height="2" fill="#f0a020"/></svg>
</body></html>
